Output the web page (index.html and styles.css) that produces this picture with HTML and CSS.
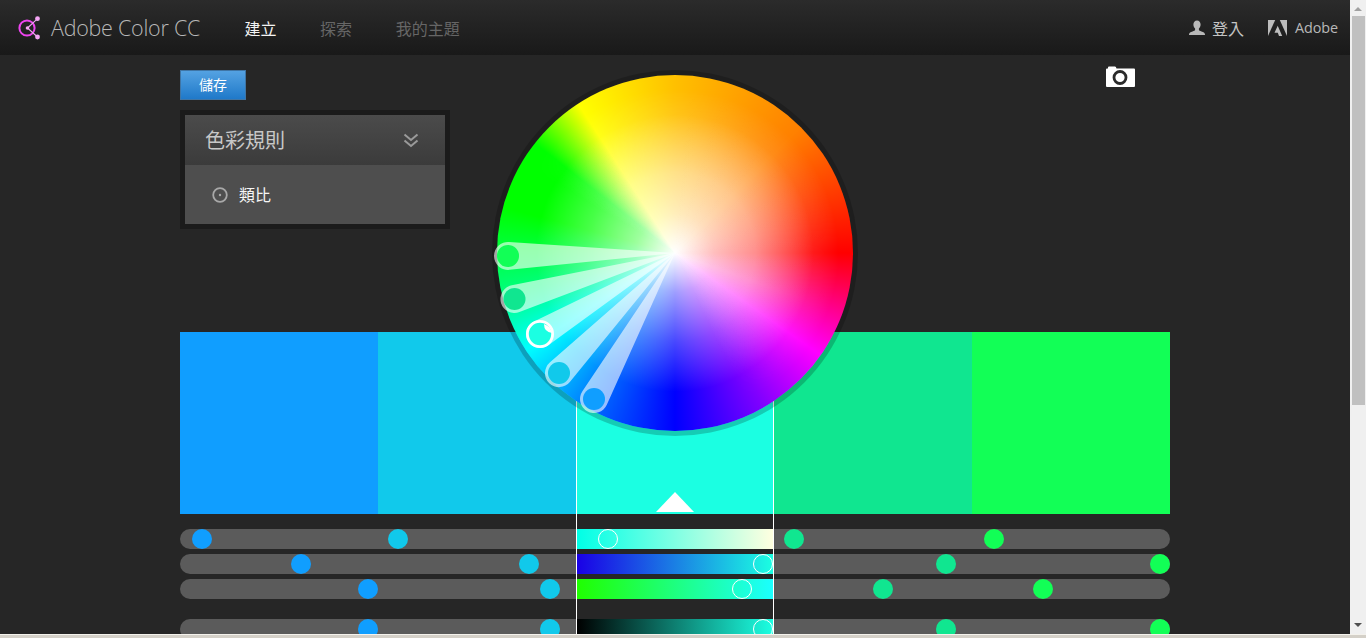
FILE: index.html
```html
<!DOCTYPE html>
<html lang="zh-Hant">
<head>
<meta charset="utf-8">
<title>Adobe Color CC</title>
<link rel="stylesheet" href="styles.css">
</head>
<body>
<div class="window">
  <div class="page">
    <header class="topbar">
      <div class="brand">
        <svg class="brand-logo" viewBox="0 0 28 28" width="28" height="28">
          <circle class="logo-ring" cx="11" cy="14" r="7.6"/>
          <path class="logo-line" d="M21.5 4.7 L11.5 14 L21.5 23"/>
          <circle class="logo-dot" cx="21.5" cy="4.7" r="2.4"/>
          <circle class="logo-dot" cx="21.5" cy="23" r="2.4"/>
          <circle class="logo-dot" cx="11.5" cy="14" r="1.8"/>
        </svg>
        <span class="brand-name">Adobe Color CC</span>
      </div>
      <nav class="nav">
        <a class="nav-item active">建立</a>
        <a class="nav-item">探索</a>
        <a class="nav-item">我的主題</a>
      </nav>
      <div class="account">
        <svg class="user-icon" viewBox="0 0 16 16" width="16" height="16">
          <path d="M8 0.5c2.2 0 3.6 1.7 3.6 4 0 1.7-.7 3.2-1.7 4v1.2c0 .7 1 1.1 2.6 1.7 1.9.7 3.5 1.2 3.5 3.1v.5H0v-.5c0-1.9 1.6-2.4 3.5-3.1 1.6-.6 2.6-1 2.6-1.7V8.500c-1-.8-1.7-2.300-1.700-4 0-2.300 1.400-4 3.600-4z"/>
        </svg>
        <span class="account-text">登入</span>
      </div>
      <div class="adobe">
        <svg class="adobe-logo" viewBox="0 0 19 16" width="19" height="16">
          <path d="M0 0H7.200L0 16Z"/>
          <path d="M11.800 0H19V16Z"/>
          <path d="M9.700 5.800L14.200 16H11L9.800 12.700H6.500Z"/>
        </svg>
        <span class="adobe-text">Adobe</span>
      </div>
    </header>

    <main class="stage">
      <section class="upper">
        <div class="tools">
          <button class="save">儲存</button>
          <div class="panel">
            <div class="panel-head">
              <span class="panel-title">色彩規則</span>
              <svg class="chevrons" viewBox="0 0 16 15" width="16" height="15">
                <path d="M1.500 1.500L8 7L14.500 1.500"/>
                <path d="M1.500 7.500L8 13L14.500 7.500"/>
              </svg>
            </div>
            <div class="panel-body">
              <svg class="radio" viewBox="0 0 16 16" width="16" height="16">
                <circle class="radio-ring" cx="8" cy="8" r="6.800"/>
                <circle class="radio-dot" cx="8" cy="8" r="1.200"/>
              </svg>
              <span class="rule">類比</span>
            </div>
          </div>
        </div>
        <svg class="camera" viewBox="0 0 29 21" width="29" height="21">
          <path class="camera-body" d="M1 2.500H2V1.500Q2 .5 3 .5H9Q10 .5 10.500 2.500H28Q29 2.500 29 3.500V20Q29 21 28 21H1Q0 21 0 20V3.500Q0 2.500 1 2.500Z"/>
          <circle class="camera-lens" cx="14" cy="11.500" r="6"/>
        </svg>
      </section>

      <section class="lower">
        <div class="swatches">
          <div class="swatch c1"></div>
          <div class="swatch c2"></div>
          <div class="swatch c3"><span class="pointer"></span></div>
          <div class="swatch c4"></div>
          <div class="swatch c5"></div>
        </div>

        <div class="sliders">
          <div class="track">
            <div class="seg seg-s"></div>
            <span class="dot c1" style="left:12px"></span>
            <span class="dot c2" style="left:208px"></span>
            <span class="dot ring" style="left:418px"></span>
            <span class="dot c4" style="left:604px"></span>
            <span class="dot c5" style="left:804px"></span>
          </div>
          <div class="track">
            <div class="seg seg-h"></div>
            <span class="dot c1" style="left:111px"></span>
            <span class="dot c2" style="left:339px"></span>
            <span class="dot ring" style="left:573px"></span>
            <span class="dot c4" style="left:756px"></span>
            <span class="dot c5" style="left:970px"></span>
          </div>
          <div class="track">
            <div class="seg seg-g"></div>
            <span class="dot c1" style="left:178px"></span>
            <span class="dot c2" style="left:360px"></span>
            <span class="dot ring" style="left:552px"></span>
            <span class="dot c4" style="left:693px"></span>
            <span class="dot c5" style="left:853px"></span>
          </div>
          <div class="track track-gap">
            <div class="seg seg-b"></div>
            <span class="dot c1" style="left:178px"></span>
            <span class="dot c2" style="left:360px"></span>
            <span class="dot ring" style="left:573px"></span>
            <span class="dot c4" style="left:756px"></span>
            <span class="dot c5" style="left:970px"></span>
          </div>
        </div>
        <div class="frame"></div>
      </section>

      <div class="wheel">
        <div class="wheel-glow"></div>
        <svg class="spokes" viewBox="0 0 356 356" width="356" height="356">
          <g transform="translate(178 178)">
            <path class="spoke" transform="rotate(179)" d="M0 0L165.830 -13.950A14 14 0 1 1 165.830 13.950Z"/>
            <path class="spoke" transform="rotate(164)" d="M0 0L165.830 -13.950A14 14 0 1 1 165.830 13.950Z"/>
            <path class="spoke" transform="rotate(149)" d="M0 0L156.150 -13.940A14 14 0 1 1 156.150 13.940Z"/>
            <path class="spoke" transform="rotate(134)" d="M0 0L165.830 -13.950A14 14 0 1 1 165.830 13.950Z"/>
            <path class="spoke" transform="rotate(119)" d="M0 0L165.830 -13.950A14 14 0 1 1 165.830 13.950Z"/>
          </g>
          <circle class="h5" cx="11" cy="180.900" r="11"/>
          <circle class="h4" cx="17.500" cy="224" r="11"/>
          <circle class="h3" cx="43" cy="259" r="12.600"/>
          <path class="notch" d="M47 249Q47 257 55 258A12 12 0 0 0 47 249Z"/>
          <circle class="h2" cx="62" cy="298" r="11"/>
          <circle class="h1" cx="97" cy="324" r="11"/>
        </svg>
      </div>
    </main>
  </div>
  <aside class="scrollbar">
    <span class="arrow-up"></span>
    <span class="thumb"></span>
    <span class="arrow-down"></span>
  </aside>
</div>
<div class="status-line"></div>
</body>
</html>
```
FILE: styles.css
```css
* { box-sizing: border-box; }
html, body { margin: 0; height: 100%; overflow: hidden; }
body {
  background: #d4d0c8;
  font-family: "Noto Sans CJK TC", "Liberation Sans", sans-serif;
}
.window { display: flex; height: 634px; }
.page { width: 1350px; height: 634px; background: #262626; overflow: hidden; position: relative; }
.status-line { height: 1px; background: #f4f2ec; }

.topbar {
  height: 55px;
  display: flex;
  align-items: center;
  background: linear-gradient(#2b2b2b, #191919);
  padding: 0 12px 0 16px;
}
.brand { display: flex; align-items: center; width: 228.6px; }
.brand-logo { flex: none; }
.logo-ring { fill: none; stroke: #ee44f0; stroke-width: 2; }
.logo-line { fill: none; stroke: #f0a8f0; stroke-width: 1.100; }
.logo-dot { fill: #f5a6f5; }
.brand-name { margin-left: 7px; font: 300 21.5px "Open Sans", sans-serif; color: #b8b8b8; white-space: nowrap; letter-spacing: -.25px; }
.nav { display: flex; gap: 43.5px; flex: 1; }
.nav-item { font-size: 16px; line-height: 24px; color: #666; }
.nav-item.active { color: #f4f4f4; }
.account { display: flex; align-items: center; gap: 7px; }
.user-icon { fill: #b8b8b8; }
.account-text { font-size: 16px; color: #c4c4c4; }
.adobe { display: flex; align-items: center; gap: 8px; margin-left: 24px; }
.adobe-logo { fill: #bdbdbd; }
.adobe-text { font: 14.400px "Open Sans", sans-serif; color: #b8b8b8; letter-spacing: -.1px; }

.stage { position: relative; width: 990px; margin-left: 180px; }
.upper { height: 277px; display: flex; justify-content: space-between; padding: 11px 35px 0 0; }
.tools { margin-top: 4px; }
.save {
  display: block;
  width: 66px;
  height: 30px;
  padding: 0 0 2px;
  border: 1px solid #3f75a5;
  background: linear-gradient(#54a2e2, #1f79c9);
  color: #fff;
  font: 14px "Noto Sans CJK TC", sans-serif;
}
.panel { width: 270px; margin-top: 10px; padding: 5px; background: #1b1b1b; }
.panel-head {
  height: 50px;
  display: flex;
  align-items: center;
  justify-content: space-between;
  padding: 0 26px 0 20px;
  background: linear-gradient(#4b4b4b, #3b3b3b);
}
.panel-title { font-size: 20px; color: #c8c8c8; margin-bottom: 2px; }
.chevrons { fill: none; stroke: #9a9a9a; stroke-width: 2; }
.panel-body {
  height: 59px;
  display: flex;
  align-items: center;
  gap: 11px;
  padding-left: 27px;
  background: #4e4e4e;
}
.radio-ring { fill: none; stroke: #a8a8a8; stroke-width: 1.800; }
.radio-dot { fill: #a8a8a8; }
.rule { font-size: 16px; color: #f6f6f6; margin-bottom: 2px; }
.camera-body { fill: #fff; }
.camera-lens { fill: none; stroke: #2a2a2a; stroke-width: 2.800; }

.lower { position: relative; height: 302px; }
.swatches { display: flex; height: 182px; }
.swatch { position: relative; flex: 0 0 198px; }
.c1 { background: #109eff; }
.c2 { background: #11c9eb; }
.c3 { background: #1bffe2; }
.c4 { background: #10e690; }
.c5 { background: #12ff56; }
.pointer {
  position: absolute;
  left: 80px;
  bottom: 2px;
  border-left: 19px solid transparent;
  border-right: 19px solid transparent;
  border-bottom: 20px solid #fff;
}
.sliders { display: flex; flex-direction: column; gap: 5px; padding-top: 15px; }
.track { position: relative; flex: none; height: 20px; border-radius: 10px; background: #5b5b5b; }
.track-gap { margin-top: 15px; }
.seg { position: absolute; left: 397px; width: 196px; top: 0; bottom: 0; }
.seg-s { background: linear-gradient(90deg, #00ffe6, #ffffe0); }
.seg-h { background: linear-gradient(90deg, #1a00e6, #1bffe2); }
.seg-g { background: linear-gradient(90deg, #20ff00, #1bffff); }
.seg-b { background: linear-gradient(90deg, #000, #1bffe2); }
.dot { position: absolute; top: 0; width: 20px; height: 20px; border-radius: 50%; }
.dot.ring { border: 1px solid #fff; }
.frame {
  position: absolute;
  left: 396px;
  top: 0;
  bottom: 0;
  width: 198px;
  border-left: 1px solid #fff;
  border-right: 1px solid #fff;
}

.wheel {
  position: absolute;
  left: 317px;
  top: 20px;
  width: 356px;
  height: 356px;
  border-radius: 50%;
  box-shadow: 0 0 0 5px rgba(0, 0, 0, .2);
  background:
    radial-gradient(circle closest-side, #fff 0, rgba(255, 255, 255, .62) 22%, rgba(255, 255, 255, .28) 50%, rgba(255, 255, 255, 0) 78%),
    conic-gradient(#ffc000 0deg, #ff8000 45deg, #ff0000 90deg, #ff00ff 125deg, #8000ff 150deg, #0000ff 180deg, #0060ff 205deg, #00ffff 237deg, #00ff80 256deg, #00ff00 285deg, #00ff00 308deg, #ffff00 327deg, #ffc000 360deg);
}
.wheel-glow {
  position: absolute;
  inset: 0;
  border-radius: 50%;
  background: conic-gradient(rgba(255, 255, 255, .3) 0deg, rgba(255, 255, 255, .34) 110deg, rgba(255, 255, 255, 0) 155deg, rgba(255, 255, 255, 0) 300deg, rgba(255, 255, 255, .3) 328deg, rgba(255, 255, 255, .3) 360deg);
  -webkit-mask-image: radial-gradient(circle closest-side, #000 0, #000 45%, transparent 92%);
  mask-image: radial-gradient(circle closest-side, #000 0, #000 45%, transparent 92%);
}
.spokes { position: absolute; left: 0; top: 0; overflow: visible; }
.spoke { fill: rgba(255, 255, 255, .6); }
.h1 { fill: #109eff; }
.h2 { fill: #11c9eb; }
.h3 { fill: #1bffe2; stroke: #fff; stroke-width: 2.800; }
.h4 { fill: #10e690; }
.h5 { fill: #12ff56; }
.notch { fill: #fff; }

.scrollbar { position: relative; flex: none; width: 16px; background: #f0f0f0; }
.arrow-up {
  position: absolute;
  left: 4px;
  top: 7px;
  border-left: 4px solid transparent;
  border-right: 4px solid transparent;
  border-bottom: 4px solid #a0a0a0;
}
.thumb { position: absolute; left: 2px; right: 1px; top: 16px; height: 389px; background: #c0c0c0; }
.arrow-down {
  position: absolute;
  left: 4px;
  top: 623px;
  border-left: 4px solid transparent;
  border-right: 4px solid transparent;
  border-top: 4px solid #505050;
}
```
